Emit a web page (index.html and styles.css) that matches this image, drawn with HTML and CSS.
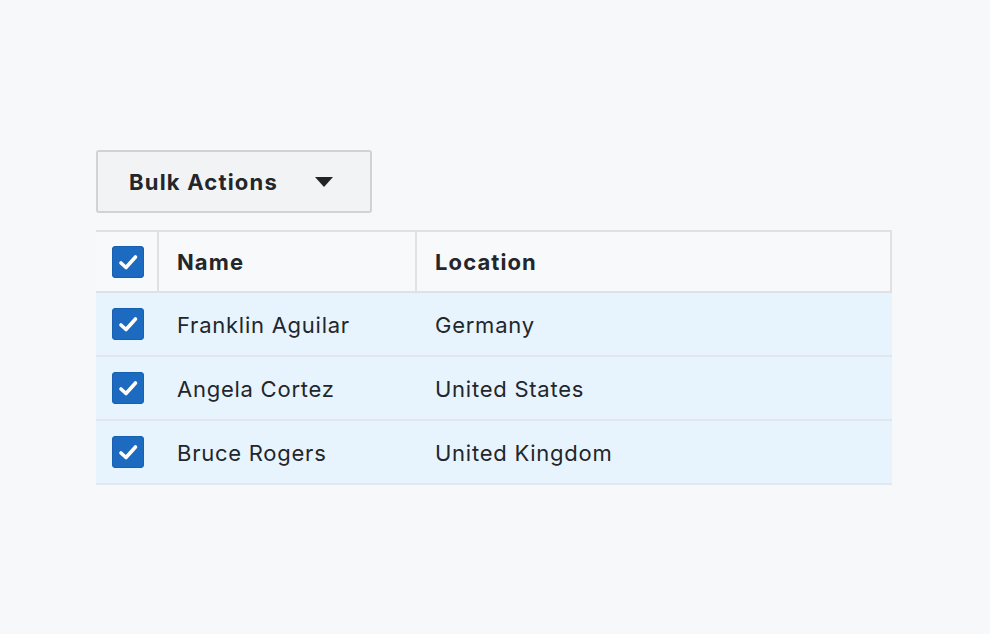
FILE: index.html
```html
<!DOCTYPE html>
<html lang="en">
<head>
<meta charset="utf-8">
<title>Bulk Actions</title>
<link rel="stylesheet" href="styles.css">
</head>
<body>
<main class="page">
  <button class="bulk-btn" type="button">
    <span class="bulk-label">Bulk Actions</span>
    <svg class="caret" width="18" height="10" viewBox="0 0 18 10"><path d="M0 0H18L9 10Z" fill="#212326"/></svg>
  </button>
  <div class="table">
    <div class="row head">
      <div class="cell check-cell"><span class="checkbox"><svg width="32" height="32" viewBox="0 0 32 32"><path d="M9 17L14 21.5L23.5 11" fill="none" stroke="#fff" stroke-width="3.6" stroke-linecap="round" stroke-linejoin="round"/></svg></span></div>
      <div class="cell name-cell">Name</div>
      <div class="cell loc-cell">Location</div>
    </div>
    <div class="row body-row">
      <div class="cell check-cell"><span class="checkbox"><svg width="32" height="32" viewBox="0 0 32 32"><path d="M9 17L14 21.5L23.5 11" fill="none" stroke="#fff" stroke-width="3.6" stroke-linecap="round" stroke-linejoin="round"/></svg></span></div>
      <div class="cell name-cell">Franklin Aguilar</div>
      <div class="cell loc-cell">Germany</div>
    </div>
    <div class="row body-row">
      <div class="cell check-cell"><span class="checkbox"><svg width="32" height="32" viewBox="0 0 32 32"><path d="M9 17L14 21.5L23.5 11" fill="none" stroke="#fff" stroke-width="3.6" stroke-linecap="round" stroke-linejoin="round"/></svg></span></div>
      <div class="cell name-cell">Angela Cortez</div>
      <div class="cell loc-cell">United States</div>
    </div>
    <div class="row body-row">
      <div class="cell check-cell"><span class="checkbox"><svg width="32" height="32" viewBox="0 0 32 32"><path d="M9 17L14 21.5L23.5 11" fill="none" stroke="#fff" stroke-width="3.6" stroke-linecap="round" stroke-linejoin="round"/></svg></span></div>
      <div class="cell name-cell">Bruce Rogers</div>
      <div class="cell loc-cell">United Kingdom</div>
    </div>
  </div>
</main>
</body>
</html>
```

FILE: styles.css
```css
* { box-sizing: border-box; }

html, body {
  margin: 0;
  padding: 0;
  background: #f7f8fa;
}

body {
  font-family: Inter, "Noto Sans", "Liberation Sans", sans-serif;
  color: #23262a;
  font-size: 22px;
  letter-spacing: 0.75px;
}

.page {
  padding: 150px 0 0 96px;
  display: flex;
  flex-direction: column;
  align-items: flex-start;
  gap: 17px;
}

.bulk-btn {
  width: 276px;
  height: 63px;
  border: 2px solid #cfd3d8;
  border-radius: 3px;
  background: #f2f3f5;
  display: flex;
  align-items: center;
  justify-content: space-between;
  padding: 0 37px 0 31px;
  font-family: inherit;
  font-size: 22px;
  font-weight: 700;
  letter-spacing: 1.2px;
  color: #23262a;
  cursor: pointer;
}

.caret { display: block; }

.table {
  width: 796px;
  display: flex;
  flex-direction: column;
}

.row {
  display: grid;
  grid-template-columns: 63px 258px 1fr;
}

.head {
  height: 63px;
  background: #f8f9fb;
  border-top: 2px solid #dfe1e5;
  border-right: 2px solid #dfe1e5;
  border-bottom: 2px solid #dfe1e5;
  font-weight: 700;
  letter-spacing: 1.1px;
}

.head .check-cell,
.head .name-cell {
  border-right: 2px solid #dfe1e5;
}

.body-row {
  height: 64px;
  background: #e7f4fe;
  border-bottom: 2px solid #e1e7ec;
}

.cell {
  display: flex;
  align-items: center;
  padding-left: 18px;
  padding-top: 1px;
}

.check-cell {
  padding-left: 16px;
  padding-top: 0;
}

.checkbox {
  width: 32px;
  height: 32px;
  border-radius: 4px;
  background: #1c6bc0;
  box-shadow: inset 0 0 0 1px #1760b0;
  display: block;
}

.checkbox svg { display: block; }
```
